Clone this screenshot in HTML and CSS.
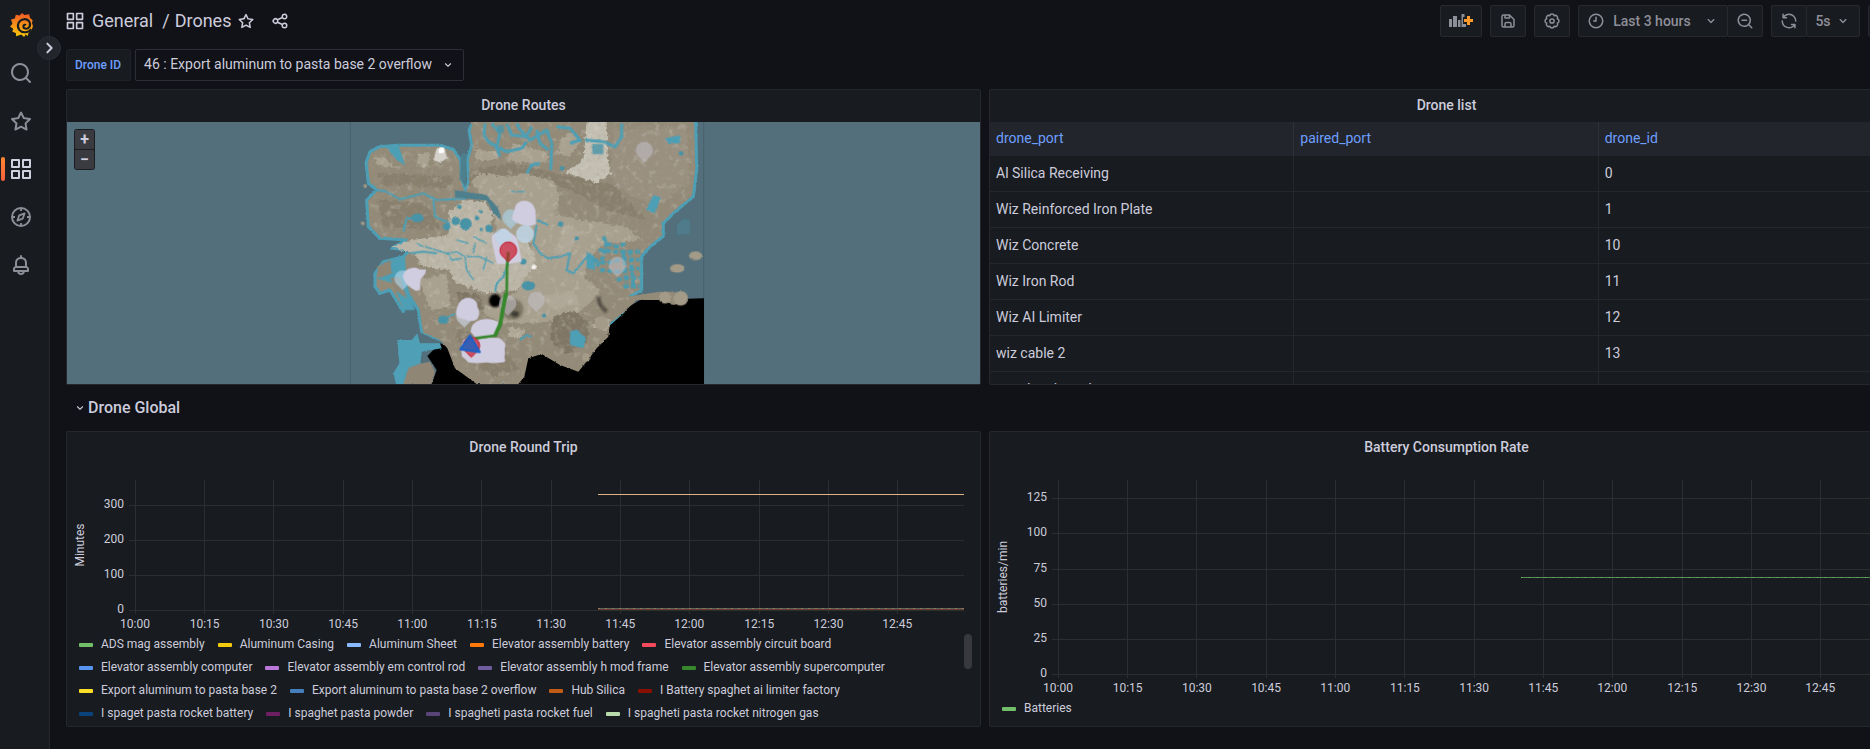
FILE: index.html
```html
<!DOCTYPE html>
<html lang="en">
<head>
<meta charset="utf-8">
<title>Drones - Grafana</title>
<link rel="stylesheet" href="styles.css">
</head>
<body>
<svg class="defs" aria-hidden="true">
  <defs>
    <symbol id="i-apps" viewBox="0 0 24 24"><path fill="none" stroke="currentColor" stroke-width="2" stroke-linejoin="round" d="M3 3h7v7H3zM14 3h7v7h-7zM3 14h7v7H3zM14 14h7v7h-7z"/></symbol>
    <symbol id="i-search" viewBox="0 0 24 24"><path fill="currentColor" d="M21.71,20.29,18,16.61A9,9,0,1,0,16.61,18l3.68,3.68a1,1,0,0,0,1.42,0A1,1,0,0,0,21.71,20.29ZM11,18a7,7,0,1,1,7-7A7,7,0,0,1,11,18Z"/></symbol>
    <symbol id="i-star" viewBox="0 0 24 24"><path fill="currentColor" d="M22,9.67A1,1,0,0,0,21.14,9l-5.69-.83L12.9,3a1,1,0,0,0-1.8,0L8.55,8.16,2.86,9a1,1,0,0,0-.81.68,1,1,0,0,0,.25,1l4.13,4-1,5.68A1,1,0,0,0,6.9,21.44L12,18.77l5.1,2.67a.93.93,0,0,0,.46.12,1,1,0,0,0,.59-.19,1,1,0,0,0,.4-1l-1-5.68,4.13-4A1,1,0,0,0,22,9.67Zm-6.15,4a1,1,0,0,0-.29.88l.72,4.2-3.76-2a1.06,1.06,0,0,0-.94,0l-3.76,2,.72-4.2a1,1,0,0,0-.29-.88l-3-3,4.21-.61a1,1,0,0,0,.76-.55L12,5.7l1.88,3.82a1,1,0,0,0,.76.55l4.21.61Z"/></symbol>
    <symbol id="i-compass" viewBox="0 0 24 24"><g fill="none" stroke="currentColor" stroke-width="2"><circle cx="12" cy="12" r="9"/><path stroke-linejoin="round" d="M15.6 8.4l-1.9 5.3-5.3 1.9 1.9-5.3z" stroke-width="1.8"/><path d="M12 3v3M12 18v3M3 12h3M18 12h3" stroke-width="1.8"/></g></symbol>
    <symbol id="i-bell" viewBox="0 0 24 24"><path fill="currentColor" d="M18,13.18V10a6,6,0,0,0-5-5.91V3a1,1,0,0,0-2,0V4.09A6,6,0,0,0,6,10v3.18A3,3,0,0,0,4,16v2a1,1,0,0,0,1,1H8.14a4,4,0,0,0,7.72,0H19a1,1,0,0,0,1-1V16A3,3,0,0,0,18,13.18ZM8,10a4,4,0,0,1,8,0v3H8Zm4,10a2,2,0,0,1-1.72-1h3.44A2,2,0,0,1,12,20Zm6-3H6V16a1,1,0,0,1,1-1H17a1,1,0,0,1,1,1Z"/></symbol>
    <symbol id="i-share" viewBox="0 0 24 24"><path fill="currentColor" d="M18,14a4,4,0,0,0-3.08,1.48l-5.1-2.35a3.64,3.64,0,0,0,0-2.26l5.1-2.35A4,4,0,1,0,14,6a4.17,4.17,0,0,0,.07.71L8.79,9.14a4,4,0,1,0,0,5.72l5.28,2.43A4.17,4.17,0,0,0,14,18a4,4,0,1,0,4-4ZM18,4a2,2,0,1,1-2,2A2,2,0,0,1,18,4ZM6,14a2,2,0,1,1,2-2A2,2,0,0,1,6,14Zm12,6a2,2,0,1,1,2-2A2,2,0,0,1,18,20Z"/></symbol>
    <symbol id="i-save" viewBox="0 0 24 24"><path fill="currentColor" d="M20.71,9.29l-6-6a1,1,0,0,0-.32-.21A1.09,1.09,0,0,0,14,3H6A3,3,0,0,0,3,6V18a3,3,0,0,0,3,3H18a3,3,0,0,0,3-3V10A1,1,0,0,0,20.71,9.29ZM9,5h4V7H9Zm6,14H9V16a1,1,0,0,1,1-1h4a1,1,0,0,1,1,1Zm4-1a1,1,0,0,1-1,1H17V16a3,3,0,0,0-3-3H10a3,3,0,0,0-3,3v3H6a1,1,0,0,1-1-1V6A1,1,0,0,1,6,5H7V8A1,1,0,0,0,8,9h6a1,1,0,0,0,1-1V6.41l4,4Z"/></symbol>
    <symbol id="i-cog" viewBox="0 0 24 24"><g fill="none" stroke="currentColor" stroke-width="2"><path stroke-linejoin="round" d="M14.91 4.98A3 3 0 0 1 19.02 9.09 3 3 0 0 1 19.02 14.91 3 3 0 0 1 14.91 19.02 3 3 0 0 1 9.09 19.02 3 3 0 0 1 4.98 14.91 3 3 0 0 1 4.98 9.09 3 3 0 0 1 9.09 4.98 3 3 0 0 1 14.91 4.98z"/><circle cx="12" cy="12" r="2.800"/></g></symbol>
    <symbol id="i-clock" viewBox="0 0 24 24"><g fill="none" stroke="currentColor" stroke-width="2" stroke-linecap="round"><circle cx="12" cy="12" r="9"/><path d="M12 7v5H9"/></g></symbol>
    <symbol id="i-zoomout" viewBox="0 0 24 24"><path fill="currentColor" d="M21.71,20.29,18,16.61A9,9,0,1,0,16.61,18l3.68,3.68a1,1,0,0,0,1.42,0A1,1,0,0,0,21.71,20.29ZM11,18a7,7,0,1,1,7-7A7,7,0,0,1,11,18Z"/><path d="M8 11h6" stroke="currentColor" stroke-width="2" stroke-linecap="round"/></symbol>
    <symbol id="i-sync" viewBox="0 0 24 24"><path fill="currentColor" d="M19.91,15.51H15.38a1,1,0,0,0,0,2h2.4A8,8,0,0,1,4,12a1,1,0,0,0-2,0,10,10,0,0,0,16.88,7.23V21a1,1,0,0,0,2,0V16.5A1,1,0,0,0,19.91,15.51ZM12,2A10,10,0,0,0,5.12,4.77V3a1,1,0,0,0-2,0V7.5a1,1,0,0,0,1,1h4.5a1,1,0,0,0,0-2H6.22A8,8,0,0,1,20,12a1,1,0,0,0,2,0A10,10,0,0,0,12,2Z"/></symbol>
    <symbol id="i-down" viewBox="0 0 24 24"><path fill="currentColor" d="M17,9.17a1,1,0,0,0-1.41,0L12,12.71,8.46,9.17a1,1,0,0,0-1.41,0,1,1,0,0,0,0,1.42l4.24,4.24a1,1,0,0,0,1.42,0L17,10.59A1,1,0,0,0,17,9.17Z"/></symbol>
    <symbol id="i-right" viewBox="0 0 24 24"><path fill="none" stroke="currentColor" stroke-width="3" stroke-linecap="round" stroke-linejoin="round" d="M9.500 5.500l6.500 6.500-6.500 6.500"/></symbol>
    <symbol id="i-tv" viewBox="0 0 24 24"><path fill="none" stroke="currentColor" stroke-width="2" stroke-linejoin="round" d="M3 4h18v12H3zM12 16v4M8 20h8"/></symbol>
  </defs>
</svg>

<div class="app">
  <nav class="sidebar" aria-label="Main">
    <a class="logo" href="#home" aria-label="Grafana">
      <svg viewBox="0 0 67 70">
        <defs><linearGradient id="flame" x1="0" y1="0" x2="0" y2="1"><stop offset="0" stop-color="#f05a28"/><stop offset="1" stop-color="#fbca0a"/></linearGradient></defs>
        <path fill="url(#flame)" d="M35 0 42 6 56 4 58 14 66 21 64 29 67 38 63 50 58 54 54 58 51 68 46 62 41 70 33 63 18 68 17 58 7 55 9 45 0 40 7 31 3 19 14 16 17 5 28 7Z"/>
        <path d="M62 47C54 58 36 60 27 49 18 36 25 20 41 18 55 17 63 31 56 41 50 49 38 46 39 38 40 34 44 33 46 36" fill="none" stroke="#181b1f" stroke-width="6"/>
      </svg>
    </a>
    <a class="nav-item" href="#search" aria-label="Search"><svg><use href="#i-search"/></svg></a>
    <a class="nav-item" href="#starred" aria-label="Starred"><svg><use href="#i-star"/></svg></a>
    <a class="nav-item active" href="#dashboards" aria-label="Dashboards"><svg><use href="#i-apps"/></svg></a>
    <a class="nav-item" href="#explore" aria-label="Explore"><svg><use href="#i-compass"/></svg></a>
    <a class="nav-item" href="#alerting" aria-label="Alerting"><svg><use href="#i-bell"/></svg></a>
    <button class="expand" type="button" aria-label="Expand menu"><svg><use href="#i-right"/></svg></button>
  </nav>

  <main class="page">
    <header class="toolbar">
      <div class="crumbs">
        <svg class="icon20"><use href="#i-apps"/></svg>
        <h1><a href="#general">General</a> <span>/</span> <a href="#drones">Drones</a></h1>
        <button class="plain" type="button" aria-label="Mark as favorite"><svg class="icon18"><use href="#i-star"/></svg></button>
        <button class="plain share" type="button" aria-label="Share dashboard"><svg class="icon18"><use href="#i-share"/></svg></button>
      </div>
      <div class="actions">
        <button class="btn add" type="button" aria-label="Add panel">
          <svg viewBox="0 0 24 13"><g fill="#8e8e99"><path d="M0 5h3v8H0zM4 2h4v11H4zM9 6h2.500v7H9z"/><path d="M12.500 0h3v3h-1.500v7h3v3h-4.500z"/></g><path d="M18 2h3v3h3v3h-3v3h-3V8h-3V5h3z" fill="#fb9a2a"/></svg>
        </button>
        <button class="btn" type="button" aria-label="Save dashboard"><svg class="icon18"><use href="#i-save"/></svg></button>
        <button class="btn" type="button" aria-label="Dashboard settings"><svg class="icon18"><use href="#i-cog"/></svg></button>
        <div class="group">
          <button class="btn time" type="button"><svg class="icon18"><use href="#i-clock"/></svg><span>Last 3 hours</span><svg class="icon16"><use href="#i-down"/></svg></button>
          <button class="btn" type="button" aria-label="Zoom out time range"><svg class="icon18"><use href="#i-zoomout"/></svg></button>
        </div>
        <div class="group">
          <button class="btn" type="button" aria-label="Refresh dashboard"><svg class="icon18"><use href="#i-sync"/></svg></button>
          <button class="btn interval" type="button"><span>5s</span><svg class="icon16"><use href="#i-down"/></svg></button>
        </div>
        <button class="btn" type="button" aria-label="Cycle view mode"><svg class="icon18"><use href="#i-tv"/></svg></button>
      </div>
    </header>

    <div class="variables">
      <label for="drone">Drone ID</label>
      <div class="select">
        <select id="drone"><option>46 : Export aluminum to pasta base 2 overflow</option></select>
        <svg class="icon14"><use href="#i-down"/></svg>
      </div>
    </div>

    <div class="row">
      <section class="panel">
        <h2>Drone Routes</h2>
        <div class="map">
          <svg class="world" viewBox="0 0 913 262" preserveAspectRatio="xMidYMid slice" role="img" aria-label="Map of drone routes">
            <defs>
              <filter id="rough" x="-5%" y="-5%" width="110%" height="110%"><feTurbulence type="fractalNoise" baseFrequency="0.16" numOctaves="3" seed="4" result="n"/><feDisplacementMap in="SourceGraphic" in2="n" scale="7" xChannelSelector="R" yChannelSelector="G"/></filter>
              <filter id="blend" x="-5%" y="-5%" width="110%" height="110%"><feTurbulence type="fractalNoise" baseFrequency="0.09" numOctaves="3" seed="7" result="n"/><feDisplacementMap in="SourceGraphic" in2="n" scale="18" xChannelSelector="R" yChannelSelector="G"/><feGaussianBlur stdDeviation="1"/></filter>
              <filter id="soft" x="-30%" y="-30%" width="160%" height="160%"><feGaussianBlur stdDeviation="2"/></filter>
              <filter id="wide" x="-30%" y="-30%" width="160%" height="160%"><feGaussianBlur stdDeviation="3"/></filter>
              <filter id="grain" x="0" y="0" width="100%" height="100%"><feTurbulence type="fractalNoise" baseFrequency="0.07" numOctaves="4" seed="9"/><feColorMatrix values="0 0 0 0 .38  0 0 0 0 .34  0 0 0 0 .27  3 0 0 0 -1.500"/></filter>
              <filter id="glint" x="0" y="0" width="100%" height="100%"><feTurbulence type="fractalNoise" baseFrequency="0.05" numOctaves="3" seed="21"/><feColorMatrix values="0 0 0 0 .82  0 0 0 0 .8  0 0 0 0 .74  0 4 0 0 -2.200"/></filter>
              <clipPath id="landclip"><path d="M98 128 120 116 300 112 350 124 358 200 372 236 388 215 388 150 390 60 405 30H1060L1064 180 1052 258 994 306 962 340 962 378 918 412 900 440V545L870 565 805 640 805 680 765 715 742 745 715 780 660 762 605 729 563 742 550 797 530 822H415L348 772 328 715 305 690 255 665 243 600 235 560 215 500 215 420 205 392 130 378 92 345 88 275 112 240 92 215 86 160Z"/></clipPath>
              <path id="pin" d="M0 33C-10 21-25 14-25-2A25 25 0 0 1 25-2C25 14 10 21 0 33Z"/>
            </defs>
            <rect width="913" height="262" fill="#526f7b"/>
            <g transform="translate(273 -12) scale(.33333)">
              <path d="M31 36V822M1091 36V822" stroke="#48626d" stroke-width="3"/>
              <g filter="url(#soft)"><path d="M1092 565 900 570 850 600 800 625 790 690 740 710 600 700 540 740 520 822H1092ZM262 738 300 700 350 720 420 822H275L290 780Z" fill="#000"/></g>
              <g filter="url(#rough)">
                <path d="M168 822 160 790 178 760 172 690 215 690 232 670 240 700 300 700 305 715 245 725 240 770 200 790 195 822Z" fill="#4fa0b6"/>
                <path d="M190 822 205 775 235 762 270 755 285 785 275 822Z" fill="#8f8675"/>
                <path fill="#938a78" stroke="#4d9fb5" stroke-width="9" stroke-linejoin="round" d="M90 125 120 110 170 106 300 106 340 118 362 150 365 205 376 240 386 215 382 150 395 105 387 60 405 30H1067L1070 180 1060 260 1000 310 970 340 970 378 925 415 905 440V540L870 560 850 605 810 640 700 740 605 720 450 760 330 700 290 685 245 665 235 600 210 560 190 605 150 540 120 550 105 530 105 490 130 455 190 440 210 420 155 415 200 390 120 385 85 350 80 270 110 240 85 220 78 160Z"/>
                <path fill="#938a78" d="M240 600 330 560 860 560 960 545 1000 545 1045 572 1000 585 970 570 890 570 850 608 810 640 805 680 770 715 748 745 715 785 660 765 605 732 565 745 553 800 535 822H410L345 775 322 715 300 690 250 668ZM395 30H1055V80H400Z"/>
              </g>
              <g filter="url(#blend)">
                <path fill="#897f6d" d="M390 180 520 160 650 190 820 225 920 330 800 300 690 240 540 190 385 225ZM110 270 260 280 300 360 130 350ZM340 650 480 700 540 780 460 800 370 740ZM110 190 340 200 330 235 130 225Z"/>
                <path fill="#a9a18f" d="M392 215 420 188 500 200 560 190 640 215 660 260 640 310 720 330 860 350 900 390 800 400 760 430 730 500 780 540 760 570 700 620 600 640 480 640 420 600 540 540 580 400 470 370 460 290Z"/>
                <path fill="#999080" d="M820 60 1040 50 1050 220 960 280 870 260 810 200Z"/>
                <path fill="#bbb6a7" d="M155 412 200 392 325 375 330 300 375 270 435 276 458 310 450 365 560 385 590 450 535 540 440 550 350 520 325 480 250 470 220 430Z"/>
                <path fill="#c3bfb2" d="M740 30H800L803 150 812 190 770 220 700 196 675 186 730 150Z"/>
                <path fill="#aaa291" d="M95 145 130 140 170 175 120 165ZM235 135 270 125 265 170 230 165ZM400 115 480 130 470 150 410 150ZM520 100 600 120 630 140 600 165 500 150ZM660 90 700 65 720 100 690 140 655 130ZM240 510 320 490 330 590 270 600Z"/>
                <path fill="#7f7665" d="M640 620 700 600 750 640 740 700 680 730 630 690ZM350 545 420 555 430 600 360 590Z"/>
                <path fill="#b0a898" d="M680 340 720 370 690 430 640 430 660 380ZM770 620 810 630 800 660 760 650ZM600 560 700 540 720 580 640 600ZM510 650 560 660 540 685 505 680Z"/>
              </g>
              <g clip-path="url(#landclip)"><rect x="60" y="30" width="1030" height="800" filter="url(#grain)" opacity=".3"/><rect x="60" y="30" width="1030" height="800" filter="url(#glint)" opacity=".2"/></g>
              <g filter="url(#rough)">
                <path fill="#4d9fb5" d="M690 665 710 658 738 685 730 715 690 705ZM140 112 175 105 195 165 170 150ZM975 85 1020 75 1020 100 985 100ZM940 255 962 262 945 310 918 300ZM150 455 195 440 200 520 225 600 190 600 160 520 110 505ZM740 425 765 440 765 480 740 475Z"/>
                <path fill="#8f8675" d="M112 470 150 450 155 490 115 505ZM150 505 180 500 200 565 170 545Z"/>
                <g fill="none" stroke="#4d9fb5" stroke-width="6"><path d="M435 40 432 75 445 95 470 110 500 125 545 115 560 95M455 40 480 70 470 110 480 140M500 40 515 75 560 80 575 50M530 40 540 60 570 90 620 60 635 100 632 180M590 60 600 100 625 120M650 50 690 55 720 90 690 100M735 90 790 95 825 110 845 80 845 40M600 160 575 165 560 190" stroke-width="9"/><path d="M110 240 140 245 180 268 250 250 290 270 380 265M190 365 200 325 230 325M280 270 285 320 330 340M620 445 660 440 690 430 680 480 700 490 725 460 740 440M590 345 580 400 600 430 625 445M465 545 470 520 490 500 505 460M540 690 560 675 575 680M300 630 345 612M210 430 250 425 290 430M590 330 625 345"/><path d="M255 410 320 430 350 425 375 440 420 440 460 460M350 390 385 400M400 380 440 400M325 430 335 450 365 445M375 440 380 480 400 510M400 430 405 400M440 440 430 480M515 245H555M230 400 250 410" stroke-width="4"/></g>
                <g fill="none" stroke="#4a9bb0" stroke-width="11" stroke-dasharray="16 6"><path d="M790 380 800 400 830 410 860 400M775 420 830 425 900 425M800 395 790 440 770 470M760 450 800 460 850 445 900 450M780 480 830 485 900 475M830 510 870 500 900 505M850 530 900 528M870 420 880 530M850 430 860 520"/></g>
                <path d="M345 240 440 255 475 295 485 330 460 310 440 272 345 262ZM362 130 380 130 378 235 360 205Z" fill="#4d7f8d"/>
                <g fill="#4793a7"><circle cx="377" cy="342" r="18"/><circle cx="347" cy="333" r="12"/><circle cx="320" cy="350" r="11"/><circle cx="358" cy="291" r="7"/><circle cx="411" cy="324" r="7"/><circle cx="423" cy="305" r="5"/><circle cx="447" cy="355" r="11"/><circle cx="424" cy="358" r="5"/><ellipse cx="232" cy="324" rx="19" ry="13"/><ellipse cx="565" cy="527" rx="20" ry="14"/><ellipse cx="310" cy="629" rx="16" ry="12"/><circle cx="662" cy="342" r="8"/><circle cx="710" cy="386" r="7"/><circle cx="612" cy="617" r="6"/><circle cx="550" cy="455" r="9"/><circle cx="1023" cy="130" r="7"/><circle cx="666" cy="175" r="7"/><path d="M755 102H790V132H758ZM472 45H492V68H472Z" opacity=".8"/><path d="M1010 345 1030 325 1050 330 1050 372 1010 375Z" opacity=".35"/></g>
                <g fill="#a39a87"><ellipse cx="1067" cy="437" rx="20" ry="13"/><ellipse cx="1012" cy="475" rx="22" ry="13"/><circle cx="975" cy="563" r="18"/><circle cx="1022" cy="565" r="22"/><circle cx="738" cy="742" r="13"/><circle cx="785" cy="640" r="20"/><circle cx="75" cy="228" r="6"/><circle cx="68" cy="340" r="6"/></g>
                <path d="M280 150 290 115 312 112 322 145 300 158Z" fill="#d3d1ca"/><circle cx="304" cy="121" r="9" fill="#fff"/><circle cx="582" cy="471" r="7" fill="#f4f3ef"/>
              </g>
              <g filter="url(#wide)"><ellipse cx="465" cy="572" rx="18" ry="20"/><ellipse cx="518" cy="598" rx="32" ry="32" fill="#3b352b" opacity=".4"/><ellipse cx="525" cy="612" rx="12" ry="9" fill="#25221d" opacity=".7"/><path d="M775 560 780 585 800 605" fill="none" stroke="#24221e" stroke-width="11" opacity=".6"/></g>
              <g fill="#c8c5cf" fill-opacity=".5" stroke="#b7b4ba" stroke-opacity=".5" stroke-width="2"><use href="#pin" x="913" y="123"/><use href="#pin" x="832" y="468"/><use href="#pin" x="589" y="573"/><use href="#pin" x="503" y="583"/></g>
              <g fill="#a9cfe2" fill-opacity=".7"><use href="#pin" x="188" y="508"/><use href="#pin" x="512" y="325"/></g>
              <use href="#pin" x="373" y="620" fill="#c3c9d2" fill-opacity=".8"/>
              <g fill="#d0cde0"><path d="M188 500Q192 474 222 473 232 472 238 478L258 478 256 490 242 508 240 540 228 543Q205 530 196 518ZM523 300Q525 274 553 272 580 274 586 300L588 342Q570 352 553 346 525 340 515 325ZM456 395Q450 370 475 366 490 345 505 365 530 375 535 400L545 455Q500 465 470 460ZM352 590Q360 563 388 563 412 568 412 590 424 612 410 628 395 638 375 628 345 625 348 605ZM392 665Q392 640 420 630 450 622 474 635L478 665 440 682 405 682Z"/><path d="M370 690Q390 676 415 688 440 680 465 684 480 680 490 695 500 700 494 715 497 730 493 742 500 758 485 757 460 762 440 757 410 762 385 757 375 745 366 740 360 710 370 690Z"/><circle cx="555" cy="372" r="27" fill="#bdd5e6" opacity=".85"/></g>
              <use href="#pin" x="489" y="382" fill="#b9d7e8" fill-opacity=".6"/>
              <use href="#pin" x="505" y="423" fill="#cb4f60" stroke="#c5182f" stroke-width="3"/>
              <path d="M505 427 501 470 500 555 487 600 482 640 464 677 405 685" fill="none" stroke="#37872d" stroke-width="8" stroke-linejoin="round"/><path d="M505 427 502 455" stroke="#99402f" stroke-width="8"/><path d="M497 550 481 642 464 680" fill="none" stroke="#37872d" stroke-width="12" stroke-linejoin="round"/>
              <use href="#pin" x="394" y="709" fill="#cb4f60" stroke="#c5182f" stroke-width="3"/>
              <path d="M390 677 419 726 361 718Z" fill="#3a5eb2" stroke="#1f60c4" stroke-width="7" stroke-linejoin="round"/>
            </g>
          </svg>
          <div class="zoom"><button type="button" aria-label="Zoom in">+</button><button type="button" aria-label="Zoom out">−</button></div>
        </div>
      </section>

      <section class="panel">
        <h2>Drone list</h2>
        <div class="table-wrap">
          <table>
            <thead><tr><th scope="col">drone_port</th><th scope="col">paired_port</th><th scope="col">drone_id</th></tr></thead>
            <tbody>
              <tr><td>Al Silica Receiving</td><td></td><td>0</td></tr>
              <tr><td>Wiz Reinforced Iron Plate</td><td></td><td>1</td></tr>
              <tr><td>Wiz Concrete</td><td></td><td>10</td></tr>
              <tr><td>Wiz Iron Rod</td><td></td><td>11</td></tr>
              <tr><td>Wiz AI Limiter</td><td></td><td>12</td></tr>
              <tr><td>wiz cable 2</td><td></td><td>13</td></tr>
              <tr><td>wood main pad</td><td></td><td></td></tr>
            </tbody>
          </table>
        </div>
      </section>
    </div>

    <button class="row-title" type="button"><svg class="icon14"><use href="#i-down"/></svg>Drone Global</button>

    <div class="row">
      <section class="panel">
        <h2>Drone Round Trip</h2>
        <div class="chart trip">
          <svg class="axis">
            <text class="unit" transform="translate(17 81) rotate(-90)">Minutes</text>
            <g class="ticks"><text x="57" y="44">300</text><text x="57" y="79">200</text><text x="57" y="114">100</text><text x="57" y="149">0</text></g>
          </svg>
          <svg class="plot">
            <g class="grid">
              <path d="M-6 41.500H0M-6 76.500H0M-6 111.500H0M-6 146.500H0"/>
              <line x1="0" x2="100%" y1="41.500" y2="41.500"/><line x1="0" x2="100%" y1="76.500" y2="76.500"/><line x1="0" x2="100%" y1="111.500" y2="111.500"/><line x1="0" x2="100%" y1="146.500" y2="146.500"/>
              <line x1="0%" x2="0%" y1="16" y2="150"/><line x1="8.400%" x2="8.400%" y1="16" y2="150"/><line x1="16.750%" x2="16.750%" y1="16" y2="150"/><line x1="25.100%" x2="25.100%" y1="16" y2="150"/><line x1="33.440%" x2="33.440%" y1="16" y2="150"/><line x1="41.850%" x2="41.850%" y1="16" y2="150"/><line x1="50.200%" x2="50.200%" y1="16" y2="150"/><line x1="58.540%" x2="58.540%" y1="16" y2="150"/><line x1="66.860%" x2="66.860%" y1="16" y2="150"/><line x1="75.300%" x2="75.300%" y1="16" y2="150"/><line x1="83.650%" x2="83.650%" y1="16" y2="150"/><line x1="91.950%" x2="91.950%" y1="16" y2="150"/>
            </g>
            <g class="times"><text x="0%" y="164">10:00</text><text x="8.400%" y="164">10:15</text><text x="16.750%" y="164">10:30</text><text x="25.100%" y="164">10:45</text><text x="33.440%" y="164">11:00</text><text x="41.850%" y="164">11:15</text><text x="50.200%" y="164">11:30</text><text x="58.540%" y="164">11:45</text><text x="66.860%" y="164">12:00</text><text x="75.300%" y="164">12:15</text><text x="83.650%" y="164">12:30</text><text x="91.950%" y="164">12:45</text></g>
            <g class="series"><line x1="55.900%" x2="100%" y1="30.500" y2="30.500" stroke="#e0b285"/><line x1="55.900%" x2="100%" y1="144.500" y2="144.500" stroke="#5d665f"/><line x1="55.900%" x2="100%" y1="144.500" y2="144.500" stroke="#8f7a5c" stroke-dasharray="2 5"/><line x1="55.900%" x2="100%" y1="145.500" y2="145.500" stroke="#6b3a2b"/></g>
          </svg>
        </div>
        <div class="legend-area">
          <div class="legend">
            <button type="button"><i style="background:#73bf69"></i>ADS mag assembly</button>
            <button type="button"><i style="background:#f2cc0c"></i>Aluminum Casing</button>
            <button type="button"><i style="background:#8ab8ff"></i>Aluminum Sheet</button>
            <button type="button"><i style="background:#ff780a"></i>Elevator assembly battery</button>
            <button type="button"><i style="background:#f2495c"></i>Elevator assembly circuit board</button>
            <button type="button"><i style="background:#5794f2"></i>Elevator assembly computer</button>
            <button type="button"><i style="background:#b877d9"></i>Elevator assembly em control rod</button>
            <button type="button"><i style="background:#705da0"></i>Elevator assembly h mod frame</button>
            <button type="button"><i style="background:#37872d"></i>Elevator assembly supercomputer</button>
            <button type="button"><i style="background:#fade2a"></i>Export aluminum to pasta base 2</button>
            <button type="button"><i style="background:#447ebc"></i>Export aluminum to pasta base 2 overflow</button>
            <button type="button"><i style="background:#c15c17"></i>Hub Silica</button>
            <button type="button"><i style="background:#890f02"></i>I Battery spaghet ai limiter factory</button>
            <button type="button"><i style="background:#0a437c"></i>I spaget pasta rocket battery</button>
            <button type="button"><i style="background:#6d1f62"></i>I spaghet pasta powder</button>
            <button type="button"><i style="background:#584477"></i>I spagheti pasta rocket fuel</button>
            <button type="button"><i style="background:#b7dbab"></i>I spagheti pasta rocket nitrogen gas</button>
          </div>
          <div class="thumb"></div>
        </div>
      </section>

      <section class="panel">
        <h2>Battery Consumption Rate</h2>
        <div class="chart battery">
          <svg class="axis">
            <text class="unit" transform="translate(17 113) rotate(-90)">batteries/min</text>
            <g class="ticks"><text x="57" y="37">125</text><text x="57" y="72">100</text><text x="57" y="108">75</text><text x="57" y="143">50</text><text x="57" y="178">25</text><text x="57" y="213">0</text></g>
          </svg>
          <svg class="plot">
            <g class="grid">
              <path d="M-6 34.500H0M-6 69.500H0M-6 105.500H0M-6 140.500H0M-6 175.500H0M-6 210.500H0"/>
              <line x1="0" x2="100%" y1="34.500" y2="34.500"/><line x1="0" x2="100%" y1="69.500" y2="69.500"/><line x1="0" x2="100%" y1="105.500" y2="105.500"/><line x1="0" x2="100%" y1="140.500" y2="140.500"/><line x1="0" x2="100%" y1="175.500" y2="175.500"/><line x1="0" x2="100%" y1="210.500" y2="210.500"/>
              <line x1="0%" x2="0%" y1="16" y2="214"/><line x1="8.400%" x2="8.400%" y1="16" y2="214"/><line x1="16.750%" x2="16.750%" y1="16" y2="214"/><line x1="25.100%" x2="25.100%" y1="16" y2="214"/><line x1="33.440%" x2="33.440%" y1="16" y2="214"/><line x1="41.850%" x2="41.850%" y1="16" y2="214"/><line x1="50.200%" x2="50.200%" y1="16" y2="214"/><line x1="58.540%" x2="58.540%" y1="16" y2="214"/><line x1="66.860%" x2="66.860%" y1="16" y2="214"/><line x1="75.300%" x2="75.300%" y1="16" y2="214"/><line x1="83.650%" x2="83.650%" y1="16" y2="214"/><line x1="91.950%" x2="91.950%" y1="16" y2="214"/>
            </g>
            <g class="times"><text x="0%" y="228">10:00</text><text x="8.400%" y="228">10:15</text><text x="16.750%" y="228">10:30</text><text x="25.100%" y="228">10:45</text><text x="33.440%" y="228">11:00</text><text x="41.850%" y="228">11:15</text><text x="50.200%" y="228">11:30</text><text x="58.540%" y="228">11:45</text><text x="66.860%" y="228">12:00</text><text x="75.300%" y="228">12:15</text><text x="83.650%" y="228">12:30</text><text x="91.950%" y="228">12:45</text></g>
            <g class="series"><line x1="55.900%" x2="100%" y1="113.500" y2="113.500" stroke="#559050"/><line x1="55.900%" x2="100%" y1="113.500" y2="113.500" stroke="#73bf69" stroke-dasharray="1 7"/></g>
          </svg>
        </div>
        <div class="legend-area"><div class="legend"><button type="button"><i style="background:#73bf69"></i>Batteries</button></div></div>
      </section>
    </div>
  </main>
</div>
</body>
</html>
```
FILE: styles.css
```css
* { box-sizing: border-box; }

body {
  margin: 0;
  min-height: 100vh;
  overflow: hidden;
  background: #111217;
  color: #ccccdc;
  font: 14px/20px Roboto, "Liberation Sans", sans-serif;
}

button, select { font: inherit; color: inherit; margin: 0; }
a { color: inherit; text-decoration: none; }
.defs { position: absolute; width: 0; height: 0; }

.icon14 { width: 14px; height: 14px; flex: none; }
.icon16 { width: 16px; height: 16px; flex: none; }
.icon18 { width: 18px; height: 18px; flex: none; }
.icon20 { width: 20px; height: 20px; flex: none; }

/* The dashboard runs a little past the right edge of the window. */
.app { display: flex; min-height: 100vh; margin-right: -50px; }

.sidebar {
  position: relative;
  flex: none;
  display: flex;
  flex-direction: column;
  width: 50px;
  padding-top: 1px;
  background: #181b1f;
  border-right: 1px solid #25272c;
}
.logo, .nav-item {
  display: flex;
  align-items: center;
  justify-content: center;
  height: 48px;
  padding-right: 7px;
  color: #8e8e99;
}
.logo svg { width: 23px; height: 24px; }
.nav-item svg { width: 24px; height: 24px; }
.nav-item.active { position: relative; color: #d0d0df; }
.nav-item.active::before {
  content: "";
  position: absolute;
  left: 1px;
  top: 12px;
  width: 4px;
  height: 24px;
  border-radius: 2px;
  background: linear-gradient(#ff8833, #f55f3e);
}
.expand {
  position: absolute;
  top: 36px;
  right: -12px;
  width: 24px;
  height: 24px;
  padding: 0;
  display: flex;
  align-items: center;
  justify-content: center;
  border: 1px solid #2b2e34;
  border-radius: 50%;
  background: #22252b;
}
.expand svg { width: 16px; height: 16px; }

.page { flex: 1; min-width: 0; padding: 0 16px 20px; }

.toolbar { display: flex; align-items: center; justify-content: space-between; padding-top: 5px; }
.crumbs { display: flex; align-items: center; height: 26px; }
.crumbs > svg { margin-right: 7px; margin-left: -1px; }
h1 { display: flex; gap: 5px; margin: 0; font-size: 18px; line-height: 24px; font-weight: 400; }
h1 span { margin-left: 4px; }
.plain { display: flex; padding: 0; margin-left: 6px; border: 0; background: none; }
.plain.share { margin-left: 16px; }

.actions { display: flex; gap: 8px; }
.group { display: flex; }
.btn {
  display: flex;
  align-items: center;
  justify-content: center;
  width: 36px;
  height: 32px;
  padding: 0 0 1px;
  border: 1px solid #27292e;
  border-radius: 2px;
  background: #181b1f;
  color: #8e8e99;
  font-weight: 500;
}
.group .btn + .btn { margin-left: -1px; }
.btn.add { width: 42px; }
.btn.add svg { width: 24px; height: 13px; }
.btn.time { width: 150px; gap: 8px; }
.btn.time .icon16 { margin-left: 4px; }
.btn.interval { width: 54px; gap: 4px; }

.variables { display: flex; gap: 4px; margin: 12px 0 8px; }
.variables label {
  display: flex;
  align-items: center;
  height: 32px;
  padding: 0 9px 0 8px;
  border: 1px solid #202227;
  border-radius: 2px;
  background: #181b1f;
  color: #6e9fff;
  font-size: 12px;
  font-weight: 500;
}
.select { position: relative; }
.select select {
  appearance: none;
  width: 329px;
  height: 32px;
  padding: 0 24px 2px 8px;
  border: 1px solid #2c2f35;
  border-radius: 2px;
  background: #111217;
}
.select svg { position: absolute; right: 9px; top: 9px; pointer-events: none; }

.row { display: grid; grid-template-columns: 1fr 1fr; gap: 8px; }
.panel {
  display: flex;
  flex-direction: column;
  min-width: 0;
  height: 296px;
  overflow: hidden;
  border: 1px solid #25272c;
  border-radius: 2px;
  background: #181b1f;
}
h2 { margin: 0; padding-bottom: 2px; font-size: 14px; line-height: 30px; font-weight: 500; text-align: center; }

.map { position: relative; flex: 1; min-height: 0; background: #526f7b; }
.world { display: block; width: 100%; height: 100%; }
.zoom {
  position: absolute;
  left: 7px;
  top: 7px;
  display: grid;
  gap: 1px;
  padding: 1px;
  border-radius: 3px;
  background: #1c1d21;
}
.zoom button {
  width: 19px;
  height: 19px;
  padding: 0;
  border: 0;
  border-radius: 1px;
  background: #3a3b40;
  font-size: 16px;
  line-height: 19px;
  font-weight: 700;
}

.table-wrap { flex: 1; min-height: 0; overflow: hidden; }
table { width: 100%; table-layout: fixed; border-collapse: separate; border-spacing: 0; }
th, td { padding: 0 6px 2px; text-align: left; border-right: 1px solid #25272c; }
th:last-child, td:last-child { border-right: 0; }
th { height: 34px; background: #22252b; color: #6e9fff; font-weight: 400; border-color: #2d3036; }
td { height: 36px; border-bottom: 1px solid #25272c; }

.row-title {
  display: flex;
  align-items: center;
  gap: 1px;
  height: 30px;
  margin: 8px 0;
  padding: 0 7px;
  border: 0;
  background: none;
  font-size: 16px;
  font-weight: 500;
}

.chart { display: flex; padding-right: 16px; flex: none; }
.chart svg { display: block; height: 100%; overflow: visible; font-size: 12px; fill: #ccccdc; }
.trip { height: 168px; }
.battery { height: 232px; }
.axis { width: 68px; flex: none; }
.plot { flex: 1; min-width: 0; }
.unit, .times { text-anchor: middle; }
.ticks { text-anchor: end; }
.grid { stroke: #2c2f31; shape-rendering: crispEdges; }
.series { shape-rendering: crispEdges; }

.legend-area { display: flex; justify-content: space-between; padding: 0 8px 0 12px; min-height: 0; }
.legend { display: flex; flex-wrap: wrap; column-gap: 13px; align-content: start; }
.legend button {
  display: flex;
  align-items: center;
  gap: 8px;
  height: 23px;
  padding: 0;
  border: 0;
  background: none;
  font-size: 12px;
  white-space: nowrap;
}
.legend i { width: 14px; height: 4px; margin-top: 2px; border-radius: 1px; }
.thumb { flex: none; width: 8px; height: 35px; margin-top: 2px; border-radius: 4px; background: #37393e; }
```
